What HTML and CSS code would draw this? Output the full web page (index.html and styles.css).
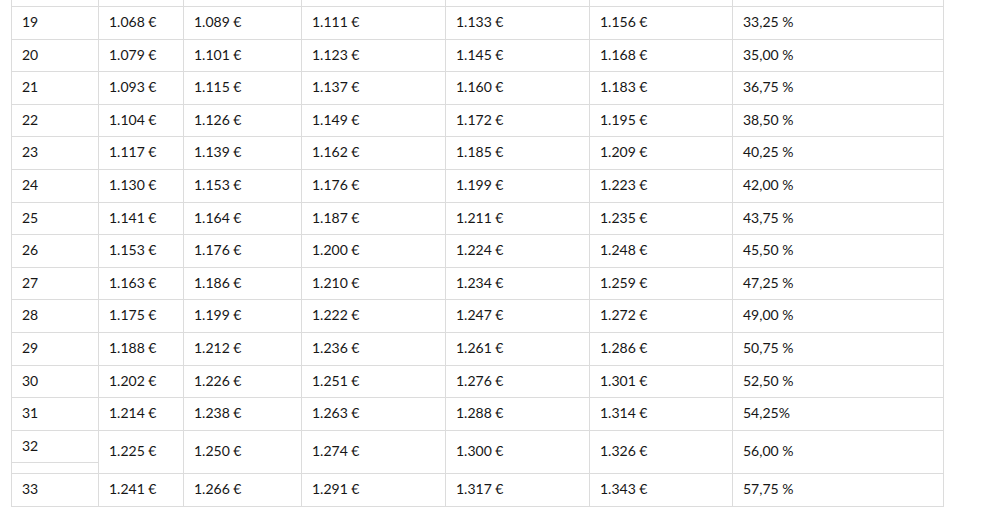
FILE: index.html
```html
<!DOCTYPE html>
<html lang="de">
<head>
<meta charset="utf-8">
<title>Tabelle</title>
<link rel="stylesheet" href="styles.css">
</head>
<body>
<div class="wrap">
<table class="grid">
<colgroup>
<col class="c1"><col class="c2"><col class="c3"><col class="c4"><col class="c5"><col class="c6"><col class="c7">
</colgroup>
<tbody>
<tr class="filler-row"><td></td><td></td><td></td><td></td><td></td><td></td><td></td></tr>
<tr><td>19</td><td>1.068 €</td><td>1.089 €</td><td>1.111 €</td><td>1.133 €</td><td>1.156 €</td><td>33,25 %</td></tr>
<tr><td>20</td><td>1.079 €</td><td>1.101 €</td><td>1.123 €</td><td>1.145 €</td><td>1.168 €</td><td>35,00 %</td></tr>
<tr><td>21</td><td>1.093 €</td><td>1.115 €</td><td>1.137 €</td><td>1.160 €</td><td>1.183 €</td><td>36,75 %</td></tr>
<tr><td>22</td><td>1.104 €</td><td>1.126 €</td><td>1.149 €</td><td>1.172 €</td><td>1.195 €</td><td>38,50 %</td></tr>
<tr><td>23</td><td>1.117 €</td><td>1.139 €</td><td>1.162 €</td><td>1.185 €</td><td>1.209 €</td><td>40,25 %</td></tr>
<tr><td>24</td><td>1.130 €</td><td>1.153 €</td><td>1.176 €</td><td>1.199 €</td><td>1.223 €</td><td>42,00 %</td></tr>
<tr><td>25</td><td>1.141 €</td><td>1.164 €</td><td>1.187 €</td><td>1.211 €</td><td>1.235 €</td><td>43,75 %</td></tr>
<tr><td>26</td><td>1.153 €</td><td>1.176 €</td><td>1.200 €</td><td>1.224 €</td><td>1.248 €</td><td>45,50 %</td></tr>
<tr><td>27</td><td>1.163 €</td><td>1.186 €</td><td>1.210 €</td><td>1.234 €</td><td>1.259 €</td><td>47,25 %</td></tr>
<tr><td>28</td><td>1.175 €</td><td>1.199 €</td><td>1.222 €</td><td>1.247 €</td><td>1.272 €</td><td>49,00 %</td></tr>
<tr><td>29</td><td>1.188 €</td><td>1.212 €</td><td>1.236 €</td><td>1.261 €</td><td>1.286 €</td><td>50,75 %</td></tr>
<tr><td>30</td><td>1.202 €</td><td>1.226 €</td><td>1.251 €</td><td>1.276 €</td><td>1.301 €</td><td>52,50 %</td></tr>
<tr><td>31</td><td>1.214 €</td><td>1.238 €</td><td>1.263 €</td><td>1.288 €</td><td>1.314 €</td><td>54,25%</td></tr>
<tr><td class="split"><div class="split-top">32</div><div class="split-bottom"></div></td><td>1.225 €</td><td>1.250 €</td><td>1.274 €</td><td>1.300 €</td><td>1.326 €</td><td>56,00 %</td></tr>
<tr><td>33</td><td>1.241 €</td><td>1.266 €</td><td>1.291 €</td><td>1.317 €</td><td>1.343 €</td><td>57,75 %</td></tr>
</tbody>
</table>
</div>
</body>
</html>
```
FILE: styles.css
```css
html, body {
  margin: 0;
  padding: 0;
  background: #ffffff;
}

.wrap {
  padding-left: 11px;
  overflow: hidden;
  height: 519px;
}

.grid {
  border-collapse: collapse;
  table-layout: fixed;
  width: 932px;
  margin-top: -26.6px;
  font-family: Lato, "Open Sans", "Liberation Sans", sans-serif;
  font-size: 14px;
  color: #161616;
}

.c1 { width: 87px; }
.c2 { width: 85px; }
.c3 { width: 118px; }
.c4 { width: 144px; }
.c5 { width: 144px; }
.c6 { width: 143px; }
.c7 { width: 211px; }

.grid td {
  border: 1px solid #dcdcdc;
  padding: 4px 10px 6px;
  line-height: 21.6px;
  vertical-align: middle;
  text-align: left;
  white-space: nowrap;
}

.filler-row td {
  height: 21.6px;
}

.grid td.split {
  padding: 0;
  vertical-align: top;
}

.split-top {
  padding: 4px 10px 6px;
  line-height: 21.6px;
  border-bottom: 1px solid #dcdcdc;
}

.split-bottom {
  height: 10px;
}
```
